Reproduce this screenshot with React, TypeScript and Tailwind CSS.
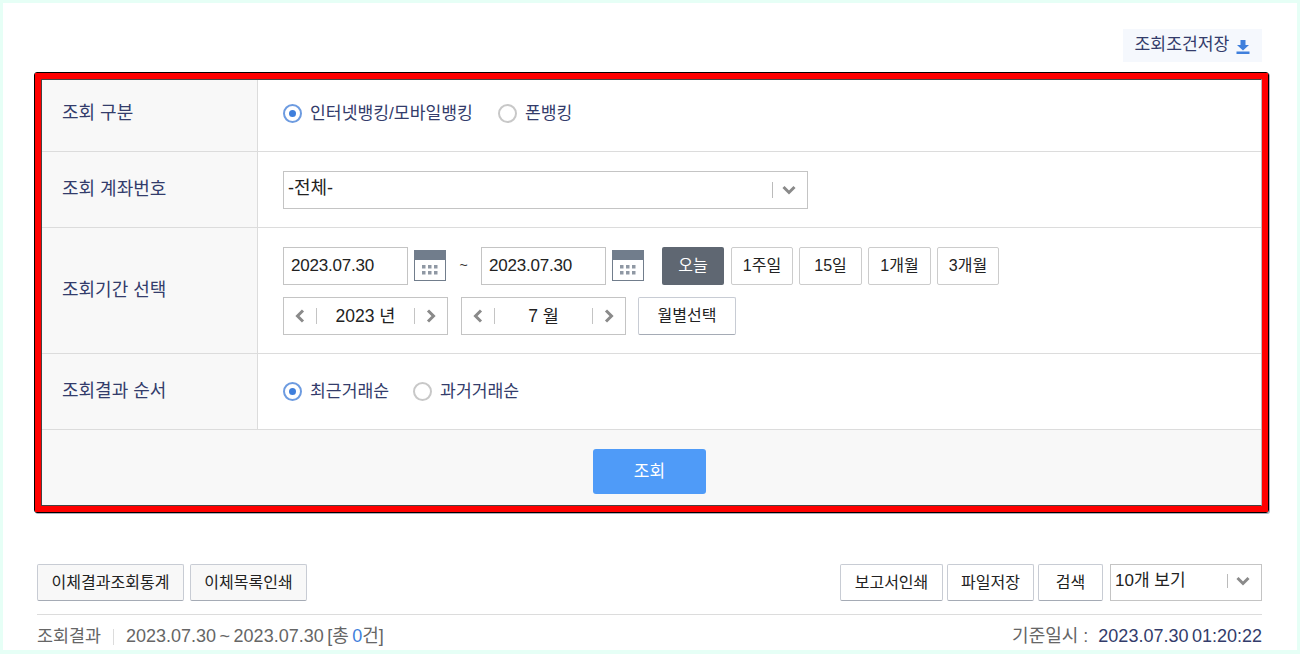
import { ReactNode } from 'react'

const font = 'font-["Liberation_Sans","Noto_Sans_CJK_KR",sans-serif]'

function Chevron({ dir, className }: { dir: 'left' | 'right' | 'down'; className?: string }) {
  const d = dir === 'left' ? 'M8 1.5 2.5 7 8 12.5' : dir === 'right' ? 'M2 1.5 7.5 7 2 12.5' : 'M1.5 2 7 7.5 12.5 2'
  const box = dir === 'down' ? '0 0 14 10' : '0 0 10 14'
  return (
    <svg viewBox={box} className={className} fill="none" stroke="#8a8a8a" strokeWidth="3">
      <path d={d} />
    </svg>
  )
}

function CalendarIcon() {
  return (
    <svg viewBox="0 0 32 32" className="w-[32px] h-[32px] shrink-0">
      <rect x="0" y="0" width="32" height="31" fill="#717d8c" />
      <rect x="1" y="10" width="30" height="20" fill="#fff" />
      <g fill="#8f98a4">
        <rect x="8" y="15" width="3.5" height="3.5" />
        <rect x="14" y="15" width="3.5" height="3.5" />
        <rect x="20" y="15" width="3.5" height="3.5" />
        <rect x="8" y="21" width="3.5" height="3.5" />
        <rect x="14" y="21" width="3.5" height="3.5" />
        <rect x="20" y="21" width="3.5" height="3.5" />
      </g>
    </svg>
  )
}

function Radio({ label, checked }: { label: string; checked?: boolean }) {
  return (
    <label className="flex items-center gap-[8px] text-[17.2px] text-[#333c6b]">
      {checked ? (
        <span className="w-[19px] h-[19px] rounded-full border-2 border-[#6d9be0] flex items-center justify-center bg-white">
          <span className="w-[7px] h-[7px] rounded-full bg-[#3f7fdc]" />
        </span>
      ) : (
        <span className="w-[19px] h-[19px] rounded-full border-2 border-[#c8c8c8] bg-white" />
      )}
      {label}
    </label>
  )
}

function Row({ title, h, labelPb, children }: { title: string; h: string; labelPb: string; children: ReactNode }) {
  return (
    <div className={`flex border-b border-[#dcdcdc] ${h}`}>
      <div className={`w-[216px] shrink-0 bg-[#f8f8f8] border-r border-[#dcdcdc] pl-[20px] flex items-center text-[18px] text-[#333c6b] ${labelPb}`}>
        {title}
      </div>
      <div className="flex-1 pl-[25px] flex flex-col justify-center">{children}</div>
    </div>
  )
}

function DateInput() {
  return (
    <div className="w-[125px] h-[38px] border border-[#c4c4c4] pl-[7px] flex items-center text-[17px] tracking-[-0.2px] text-[#222]">
      2023.07.30
    </div>
  )
}

function Period({ label, active, w }: { label: string; active?: boolean; w: string }) {
  return (
    <div
      className={`${w} h-[38px] rounded-[2px] flex items-center justify-center text-[16px] ${
        active ? 'bg-[#5f6772] text-white' : 'bg-white border border-[#ccc] text-[#222]'
      }`}
    >
      {label}
    </div>
  )
}

function Stepper({ label }: { label: string }) {
  return (
    <div className="w-[165px] h-[38px] border border-[#c4c4c4] flex items-center text-[17.5px] text-[#222]">
      <div className="w-[33px] flex justify-center border-r border-[#c4c4c4] h-[16px] items-center">
        <Chevron dir="left" className="w-[10px] h-[14px]" />
      </div>
      <div className="flex-1 text-center pt-[2px]">{label}</div>
      <div className="w-[33px] flex justify-center border-l border-[#c4c4c4] h-[16px] items-center">
        <Chevron dir="right" className="w-[10px] h-[14px]" />
      </div>
    </div>
  )
}

function ToolBtn({ label, w, grey }: { label: string; w: string; grey?: boolean }) {
  return (
    <div
      className={`${w} h-[37px] rounded-[2px] border border-[#c8ccd4] border-b-[#a5abb5] flex items-center justify-center text-[16px] text-[#222] ${
        grey ? 'bg-[#f8f8f8]' : 'bg-white'
      }`}
    >
      {label}
    </div>
  )
}

export default function App() {
  return (
    <div className={`${font} w-[1300px] h-[654px] overflow-hidden bg-[#e6fff6] pt-[3px] pl-[3px] pr-[3px] pb-[4px]`}>
      <div className="h-full overflow-hidden bg-white pl-[31px] pr-[28px] flex flex-col">
        {/* save conditions */}
        <div className="h-[69px] shrink-0 pt-[26px] pr-[7px] flex justify-end">
          <div className="w-[139px] h-[33px] bg-[#f5f8fd] flex items-center justify-center gap-[7px] text-[17.2px] text-[#333c6b]">
            <span className="pb-[2px]">조회조건저장</span>
            <svg viewBox="0 0 14 14" className="w-[14px] h-[14px] mt-[2px]" fill="#3f7fdc">
              <path d="M4.5 0h5v5h3.5L7 10.5 1 5h3.5z" />
              <rect x="0.5" y="11.5" width="13" height="2.5" />
            </svg>
          </div>
        </div>

        {/* search form */}
        <div className="w-[1235px] shrink-0 border border-black rounded-[3px] shadow-[1px_1px_0_#aab0bf]">
          <div className="border-[6px] border-[#ff0000]">
            <div className="border border-[#444] border-r-[#bbb]">
              <Row title="조회 구분" h="h-[72px]" labelPb="pb-[4px]">
                <div className="flex items-center gap-[25px] mb-[4px]">
                  <Radio label="인터넷뱅킹/모바일뱅킹" checked />
                  <Radio label="폰뱅킹" />
                </div>
              </Row>
              <Row title="조회 계좌번호" h="h-[76px]" labelPb="pb-0">
                <div className="w-[525px] h-[38px] border border-[#c4c4c4] pl-[4px] flex items-center text-[18px] text-[#222]">
                  <span className="flex-1 pb-[2px]">-전체-</span>
                  <span className="w-px h-[16px] bg-[#bbb]" />
                  <Chevron dir="down" className="w-[14px] h-[10px] ml-[9px] mr-[11px]" />
                </div>
              </Row>
              <Row title="조회기간 선택" h="h-[126px]" labelPb="pb-0">
                <div className="flex items-center">
                  <DateInput />
                  <div className="ml-[6px]">
                    <CalendarIcon />
                  </div>
                  <span className="w-[35px] text-center text-[14px] text-[#333]">~</span>
                  <DateInput />
                  <div className="ml-[6px]">
                    <CalendarIcon />
                  </div>
                  <div className="ml-[18px] flex gap-[6px]">
                    <div className="mr-px">
                      <Period label="오늘" active w="w-[62px]" />
                    </div>
                    <Period label="1주일" w="w-[62px]" />
                    <Period label="15일" w="w-[63px]" />
                    <Period label="1개월" w="w-[63px]" />
                    <Period label="3개월" w="w-[62px]" />
                  </div>
                </div>
                <div className="flex items-center mt-[12px]">
                  <Stepper label="2023 년" />
                  <div className="ml-[13px]">
                    <Stepper label="7 월" />
                  </div>
                  <div className="ml-[12px]">
                    <ToolBtn label="월별선택" w="w-[98px] !h-[38px]" />
                  </div>
                </div>
              </Row>
              <Row title="조회결과 순서" h="h-[76px]" labelPb="pb-0">
                <div className="flex items-center gap-[24px]">
                  <Radio label="최근거래순" checked />
                  <Radio label="과거거래순" />
                </div>
              </Row>
              <div className="h-[75px] bg-[#f8f8f8] flex items-center justify-center">
                <div className="w-[113px] h-[45px] mr-[4px] mt-[8px] rounded-[3px] bg-[#4f9bf8] text-white text-[17px] flex items-center justify-center">
                  조회
                </div>
              </div>
            </div>
          </div>
        </div>

        {/* result toolbar */}
        <div className="mt-[51px] pl-[3px] pr-[7px]">
          <div className="flex items-center pb-[13px] border-b border-[#dcdcdc]">
            <ToolBtn label="이체결과조회통계" w="w-[147px]" grey />
            <div className="ml-[6px]">
              <ToolBtn label="이체목록인쇄" w="w-[117px]" grey />
            </div>
            <div className="ml-auto flex gap-[4px]">
              <ToolBtn label="보고서인쇄" w="w-[103px]" />
              <ToolBtn label="파일저장" w="w-[87px]" />
              <ToolBtn label="검색" w="w-[65px]" />
              <div className="w-[152px] h-[37px] ml-[3px] border border-[#c4c4c4] pl-[4px] pb-[3px] flex items-center text-[17px] text-[#222]">
                <span className="flex-1">10개 보기</span>
                <span className="w-px h-[14px] bg-[#bbb]" />
                <Chevron dir="down" className="w-[14px] h-[10px] ml-[8px] mr-[11px]" />
              </div>
            </div>
          </div>
          <div className="mt-[8px] flex items-center text-[18px] text-[#666] whitespace-nowrap [word-spacing:-1.5px]">
            <span className="text-[17.4px]">조회결과</span>
            <span className="w-px h-[16px] bg-[#dcdcdc] mx-[12px]" />
            <span>
              2023.07.30 ~ 2023.07.30 [총 <span className="text-[#3f7fdc]">0</span>건]
            </span>
            <span className="ml-auto">기준일시</span>
            <span className="ml-[5px]">:</span>
            <span className="ml-[10px] text-[#333c6b]">2023.07.30 01:20:22</span>
          </div>
        </div>
      </div>
    </div>
  )
}
